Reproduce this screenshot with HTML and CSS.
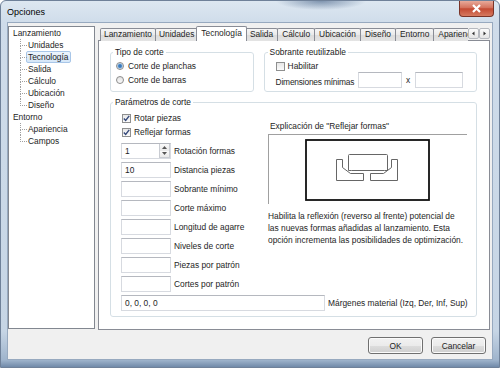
FILE: index.html
```html
<!DOCTYPE html>
<html lang="es">
<head>
	<meta charset="UTF-8">
	<title>Opciones</title>
	<link rel="stylesheet" href="styles.css">
</head>
<body>
	<div class="window">
		<div class="titlebar">
			<span class="title">Opciones</span>
			<div class="close">
				<svg width="11" height="9" viewBox="0 0 11 9"><path d="M2 1 L9 8 M9 1 L2 8" stroke="#fff" stroke-width="2.2"/></svg>
			</div>
		</div>

		<div class="client">
			<div class="main">
				<!-- arbol de secciones -->
				<ul class="tree">
					<li><span>Lanzamiento</span>
						<ul class="children">
							<li><span>Unidades</span></li>
							<li><span class="selected">Tecnología</span></li>
							<li><span>Salida</span></li>
							<li><span>Cálculo</span></li>
							<li><span>Ubicación</span></li>
							<li><span>Diseño</span></li>
						</ul>
					</li>
					<li><span>Entorno</span>
						<ul class="children">
							<li><span>Apariencia</span></li>
							<li><span>Campos</span></li>
						</ul>
					</li>
				</ul>

				<div class="tabs">
					<div class="tab-strip">
						<div class="tab-list">
							<div class="tab">Lanzamiento</div>
							<div class="tab">Unidades</div>
							<div class="tab active">Tecnología</div>
							<div class="tab">Salida</div>
							<div class="tab">Cálculo</div>
							<div class="tab">Ubicación</div>
							<div class="tab">Diseño</div>
							<div class="tab">Entorno</div>
							<div class="tab">Apariencia</div>
						</div>
						<div class="tab-arrows">
							<div class="arrow"><svg width="5" height="5" viewBox="0 0 5 5"><path d="M3.5 0.5 L1 2.5 L3.5 4.5 Z" fill="#333"/></svg></div>
							<div class="arrow"><svg width="5" height="5" viewBox="0 0 5 5"><path d="M1.5 0.5 L4 2.5 L1.5 4.5 Z" fill="#333"/></svg></div>
						</div>
					</div>

					<div class="tab-page">
						<div class="top-groups">
							<fieldset class="group cut-type">
								<legend>Tipo de corte</legend>
								<label class="opt"><span class="radio on"></span>Corte de planchas</label>
								<label class="opt"><span class="radio"></span>Corte de barras</label>
							</fieldset>

							<fieldset class="group remnant">
								<legend>Sobrante reutilizable</legend>
								<label class="opt short"><span class="check"></span>Habilitar</label>
								<div class="dims">
									<span class="dims-label">Dimensiones mínimas</span>
									<span class="field dim-a"></span>
									<span class="times">x</span>
									<span class="field dim-b"></span>
								</div>
							</fieldset>
						</div>

						<fieldset class="group params">
							<legend>Parámetros de corte</legend>
							<div class="params-body">
								<div class="params-left">
									<label class="opt"><span class="check"><svg width="7" height="7" viewBox="0 0 7 7"><path d="M0.8 3.4 L2.7 5.4 L6.2 0.9" fill="none" stroke="#34487a" stroke-width="1.4"/></svg></span>Rotar piezas</label>
									<label class="opt"><span class="check"><svg width="7" height="7" viewBox="0 0 7 7"><path d="M0.8 3.4 L2.7 5.4 L6.2 0.9" fill="none" stroke="#34487a" stroke-width="1.4"/></svg></span>Reflejar formas</label>

									<div class="rows">
										<div class="row">
											<span class="field spin">1
												<span class="spinner">
													<span class="spin-btn"><svg width="5" height="3" viewBox="0 0 5 3"><path d="M0 3 L2.5 0 L5 3 Z" fill="#555"/></svg></span>
													<span class="spin-btn"><svg width="5" height="3" viewBox="0 0 5 3"><path d="M0 0 L2.5 3 L5 0 Z" fill="#555"/></svg></span>
												</span>
											</span>
											<span>Rotación formas</span>
										</div>
										<div class="row"><span class="field">10</span><span>Distancia piezas</span></div>
										<div class="row"><span class="field"></span><span>Sobrante mínimo</span></div>
										<div class="row"><span class="field"></span><span>Corte máximo</span></div>
										<div class="row"><span class="field"></span><span>Longitud de agarre</span></div>
										<div class="row"><span class="field"></span><span>Niveles de corte</span></div>
										<div class="row"><span class="field"></span><span>Piezas por patrón</span></div>
										<div class="row"><span class="field"></span><span>Cortes por patrón</span></div>
									</div>
								</div>

								<div class="params-right">
									<div class="caption">Explicación de "Reflejar formas"</div>
									<div class="preview">
										<svg width="198" height="69" viewBox="269 132 198 69">
											<rect x="306" y="137" width="123" height="60" fill="none" stroke="#111" stroke-width="1.8"/>
											<g fill="none" stroke="#666" stroke-width="1">
												<path d="M348.5 167.5 L348.5 152.5 Q348.5 151.5 349.5 151.5 L386.5 151.5 Q387.5 151.5 387.5 152.5 L387.5 167.5 L384.5 167.5 L351.5 167.5 Z"/>
												<path d="M336.5 156.5 L336.5 177.5 L363.5 177.5 L363.5 170.5 L350.5 170.5 L342.5 164.5 L342.5 156.5 Z"/>
												<path d="M397.5 156.5 L397.5 177.5 L370.5 177.5 L370.5 170.5 L383.5 170.5 L391.5 164.5 L391.5 156.5 Z"/>
											</g>
										</svg>
									</div>
									<p class="desc">Habilita la reflexión (reverso al frente) potencial de<br>las nuevas formas añadidas al lanzamiento. Esta<br>opción incrementa las posibilidades de optimización.</p>
								</div>
							</div>

							<div class="row margins">
								<span class="field wide">0, 0, 0, 0</span>
								<span>Márgenes material (Izq, Der, Inf, Sup)</span>
							</div>
						</fieldset>
					</div>
				</div>
			</div>

			<div class="buttons">
				<button class="btn">OK</button>
				<button class="btn">Cancelar</button>
			</div>
		</div>
	</div>
</body>
</html>
```

FILE: styles.css
```css
*{
	box-sizing: border-box;
}
body{
	margin: 0;
	font-family: "Liberation Sans", Arial, sans-serif;
	font-size: 8.4px;
	color: #1e1e1e;
	background: #fff;
}

/* marco de la ventana (aero) */
.window{
	width: 500px; height: 368px;
	display: flex; flex-direction: column;
	border: 1px solid #6f8199;
	border-radius: 6px 6px 0 0;
	overflow: hidden;
	background:
		radial-gradient(ellipse 45px 9px at 320px 0, rgba(50,80,120,.55), rgba(50,80,120,0)),
		linear-gradient(to bottom, #dde7f1 0, #cfdcea 22px, #c6d5e5 330px, #9fb4cc 359px, #6a84a4 367px);
}
.titlebar{
	height: 21px;
	display: flex; align-items: flex-start;
}
.title{
	font-size: 9px; color: #000;
	margin: 6px 0 0 6px;
}
.close{
	margin-left: auto; margin-right: 5px;
	width: 35px; height: 16px;
	display: flex; align-items: center; justify-content: center;
	border: 1px solid #7a3428; border-top: none;
	border-radius: 0 0 4px 4px;
	background: linear-gradient(#e8aa9a, #d4725d 45%, #c34a33 52%, #d67a60);
}

.client{
	flex: 1;
	margin: 0 6px 7px 6px;
	padding: 3px 2px 0 0;
	border: 1px solid #97a9bf;
	background: #f0f0f0;
}
.main{
	display: flex; gap: 3px;
	height: 304px;
}

/* arbol */
.tree{
	width: 87px; height: 303px;
	margin: 0; padding: 0 0 0 2px;
	list-style: none;
	border: 1px solid #828790;
	background: #fff;
	line-height: 12px;
}
.tree ul{ list-style: none; margin: 0; padding: 0; }
.tree span{
	display: inline-block;
	padding: 0 1px; line-height: 10px;
	border: 1px solid transparent;
	border-radius: 2px;
}
.tree span.selected{
	border-color: #a8c6e8;
	background: linear-gradient(#eef5fd, #d5e6f8);
}
.children{ margin-left: 9px !important; }
.children li{
	position: relative;
	padding-left: 6px;
}
.children li::before{
	content: ""; position: absolute;
	left: 0; top: 0; width: 6px; height: 6px;
	border-left: 1px dotted #a0a0a0;
	border-bottom: 1px dotted #a0a0a0;
}
.children li:not(:last-child)::after{
	content: ""; position: absolute;
	left: 0; top: 6px; bottom: 0;
	border-left: 1px dotted #a0a0a0;
}

/* pestañas */
.tabs{
	width: 392px;
	display: flex; flex-direction: column;
}
.tab-strip{
	display: flex; height: 15px;
	margin-bottom: -1px;
	position: relative; z-index: 1;
}
.tab-list{
	flex: 1; display: flex;
	margin-left: 2px;
	overflow: hidden;
}
.tab{
	flex-shrink: 0;
	margin-top: 2px; height: 13px;
	padding: 0 3px; line-height: 11px;
	border: 1px solid #898c95; border-bottom: none;
	border-radius: 2px 2px 0 0;
	background: linear-gradient(#f6f6f6, #e9e9e9 50%, #dcdcdc 51%, #e4e4e4);
	white-space: nowrap;
}
.tab + .tab{ margin-left: -1px; }
.tab.active ~ .tab{ padding: 0 4px; }
.tab.active{
	margin-top: 0; height: 15px;
	padding: 0 4px; line-height: 12px;
	margin-left: -2px; margin-right: -1px;
	background: #fff;
	position: relative; z-index: 1;
}
.tab-arrows{
	display: flex;
	margin-top: 2px;
}
.arrow{
	width: 11px; height: 11px;
	display: flex; align-items: center; justify-content: center;
	border: 1px solid #b6b9bf; border-radius: 2px;
	background: linear-gradient(#fbfbfb, #e5e5e5);
}
.tab-page{
	height: 290px;
	padding: 6px 12px 0 11px;
	border: 1px solid #898c95;
	background: #fff;
}

/* grupos */
.top-groups{
	display: flex; gap: 10px;
}
.group{
	margin: 0;
	border: 1px solid #d5dfe5;
	border-radius: 3px;
}
.group legend{
	padding: 0 2px;
	line-height: 10px;
	color: #1a1a1a;
}
.cut-type{
	width: 144px;
	padding: 2px 4px 2px 5px;
}
.cut-type legend{ margin-left: -3px; }
.remnant{
	width: 214px;
	padding: 3px 4px 3px 10px;
}
.remnant legend{ margin-left: -7px; }

.opt{
	display: flex; align-items: center;
	height: 14px;
}
.opt.short{ height: 12px; }
.radio{
	width: 8px; height: 8px;
	margin-right: 4px;
	border: 1px solid #8c8c8c; border-radius: 50%;
	background: linear-gradient(#e2e2e2, #fafafa);
}
.radio.on{
	background: radial-gradient(circle, #2e6aa8 0, #4f8dcb 1.6px, #bcd4ea 2.6px, #eef3f8 3.4px);
}
.check{
	width: 9px; height: 9px;
	margin: 0 3px 0 1px;
	display: flex; align-items: center; justify-content: center;
	border: 1px solid #8e8f8f;
	background: linear-gradient(#e7e7e7, #fbfbfb);
}

.field{
	display: inline-block;
	width: 50px; height: 16px;
	padding-left: 3px; line-height: 14px;
	border: 1px solid #d7dae0; border-top-color: #b5b8bf;
	background: #fff;
}
.dims{
	display: flex; align-items: center;
	height: 16px;
}
.dims-label{
	width: 83px; flex-shrink: 0;
	padding-left: 1px; margin-top: 3px;
	white-space: nowrap;
	letter-spacing: -0.2px;
}
.dim-a{ width: 44px; }
.dim-b{ width: 48px; }
.times{ width: 13px; text-align: center; }

.params{
	margin-top: 5px;
	height: 220px;
	padding: 4px 4px 4px 10px;
}
.params legend{ margin-left: -8px; }
.params-body{
	display: flex;
}
.params-left{
	width: 147px;
}
.rows{
	margin-top: 4px;
}
.row{
	display: flex; align-items: center; gap: 3px;
	height: 16px; margin-bottom: 3px;
	white-space: nowrap;
}
.spin{
	display: inline-flex; justify-content: space-between;
	padding-right: 0;
}
.spinner{
	width: 11px;
	display: flex; flex-direction: column;
}
.spin-btn{
	flex: 1;
	display: flex; align-items: center; justify-content: center;
	border: 1px solid #c9ccd2; border-top: none;
	background: linear-gradient(#fafafa, #e8e8e8);
}
.spin-btn:first-child{ border-bottom: none; }
.margins{ margin: 0; }
.field.wide{ width: 204px; }

.params-right{
	width: 199px;
}
.caption{
	margin-top: 9px;
	line-height: 12px;
	margin-bottom: 2px;
	padding-left: 2px;
}
.preview{
	height: 70px;
	border-top: 1px solid #a0a0a0;
	border-left: 1px solid #a0a0a0;
}
.preview svg{ display: block; }
.desc{
	margin: 6px 0 0 0;
	line-height: 12px;
	white-space: nowrap;
}

/* botones */
.buttons{
	display: flex; justify-content: flex-end; gap: 8px;
	margin: 7px 4px 0 0;
}
.btn{
	width: 55px; height: 17px;
	padding: 0;
	font: inherit; color: #1e1e1e;
	border: 1px solid #707070; border-radius: 3px;
	background: linear-gradient(#f2f2f2 0, #ebebeb 50%, #dddddd 51%, #cfcfcf 100%);
	box-shadow: inset 0 0 0 1px #fbfbfb;
}
```
